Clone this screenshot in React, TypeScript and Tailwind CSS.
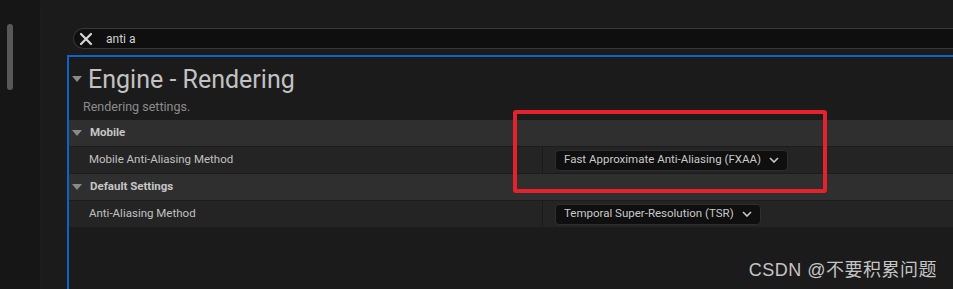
import React from 'react';

const font = { fontFamily: 'Roboto, "Noto Sans", sans-serif' };

const Caret: React.FC<{ className?: string }> = ({ className = '' }) => (
  <svg width="10" height="6" viewBox="0 0 10 6" className={className}>
    <path d="M0 0 L10 0 L5 6 Z" fill="#8a8a8a" />
  </svg>
);

const Chevron = () => (
  <svg width="10" height="6" viewBox="0 0 10 6" className="ml-[8px]">
    <path d="M1 1 L5 5 L9 1" fill="none" stroke="#c8c8c8" strokeWidth="1.6" />
  </svg>
);

const Category: React.FC<{ title: string }> = ({ title }) => (
  <div className="h-[27px] flex items-center bg-[#2f2f2f] border-b border-[#1c1c1c]">
    <Caret className="ml-[3px] mr-[8px]" />
    <span className="text-[11.5px] font-bold text-[#c6c6c6]">{title}</span>
  </div>
);

const PropertyRow: React.FC<{ label: string; value: string }> = ({ label, value }) => (
  <div className="h-[27px] flex bg-[#242424] border-b border-[#1c1c1c]">
    <div className="w-[474px] flex items-center pl-[20px] border-r border-[#1b1b1b]">
      <span className="text-[11.5px] text-[#c0c0c0]">{label}</span>
    </div>
    <div className="flex items-center pl-[12px]">
      <div className="h-[21px] flex items-center pl-[8px] pr-[8px] bg-[#0f0f0f] border border-[#2e2e2e] rounded-[4px]">
        <span className="text-[11.5px] text-[#c8c8c8]">{value}</span>
        <Chevron />
      </div>
    </div>
  </div>
);

export default function App() {
  return (
    <div className="relative w-[953px] h-[289px] flex bg-[#1b1b1b] overflow-hidden" style={font}>
      {/* left scroll strip */}
      <div className="w-[40px] bg-[#161616] pt-[24px] pl-[7px] shrink-0">
        <div className="w-[6px] h-[66px] rounded-full bg-[#585858]" />
      </div>
      <div className="w-[3px] mt-[6px] bg-[#1d1d1d] shrink-0" />

      <div className="flex-1 flex flex-col pt-[28px] pl-[24px]">
        {/* search */}
        <div className="ml-[6px] h-[21px] flex items-center bg-[#0f0f0f] border border-[#383838] border-r-0 rounded-l-full">
          <svg width="14" height="14" viewBox="0 0 14 14" className="ml-[5px]">
            <path d="M2 2 L12 12 M12 2 L2 12" stroke="#d6d6d6" strokeWidth="2.2" strokeLinecap="round" />
          </svg>
          <span className="ml-[13px] text-[12px] text-[#d0d0d0]">anti a</span>
        </div>

        {/* details panel */}
        <div className="mt-[6px] flex-1 border-l-2 border-t-2 border-[#0f62c8]">
          <div className="flex items-center h-[37px] pt-[7px]">
            <Caret className="ml-[3px] mr-[6px]" />
            <span className="text-[25px] text-[#c2c2c2] leading-none">Engine - Rendering</span>
          </div>
          <div className="h-[26px] pl-[14px] flex items-center text-[12.5px] text-[#8c8c8c]">
            Rendering settings.
          </div>

          <Category title="Mobile" />
          <PropertyRow label="Mobile Anti-Aliasing Method" value="Fast Approximate Anti-Aliasing (FXAA)" />
          <Category title="Default Settings" />
          <PropertyRow label="Anti-Aliasing Method" value="Temporal Super-Resolution (TSR)" />
        </div>
      </div>

      {/* annotation */}
      <div className="absolute left-[513px] top-[110px] w-[314px] h-[83px] border-4 border-[#e5222c] rounded-[3px]" />

      {/* watermark */}
      <div
        className="absolute right-[16px] top-[257px] text-[18px] tracking-[0.5px] text-[#c4c4c4]"
        style={{ fontFamily: '"Liberation Sans", "Noto Sans CJK SC", sans-serif' }}
      >
        CSDN @不要积累问题
      </div>
    </div>
  );
}
